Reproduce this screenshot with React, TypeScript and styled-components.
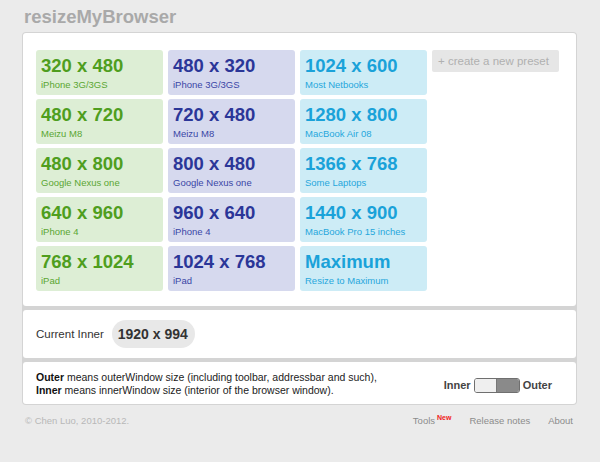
import React from 'react';
import styled, { createGlobalStyle } from 'styled-components';

const GlobalStyle = createGlobalStyle`
  html, body {
    margin: 0;
    padding: 0;
    background: #ebebeb;
    font-family: Arial, "Liberation Sans", sans-serif;
  }
`;

const Page = styled.div`
  width: 600px;
  height: 462px;
  background: #ebebeb;
`;

const Title = styled.h1`
  margin: 0;
  padding: 6px 0 4px 24px;
  font-size: 18.5px;
  line-height: 22px;
  font-weight: bold;
  color: #a9a9a9;
`;

const Panels = styled.div`
  margin-left: 22px;
  width: 553px;
  padding: 1px;
  background: #d4d4d4;
  border-radius: 4px;
  display: flex;
  flex-direction: column;
  gap: 4px;
`;

const Panel = styled.div`
  background: #fff;
  border-radius: 3px;
`;

const PresetPanel = styled(Panel)`
  padding: 17px 17px 15px 13px;
`;

const Grid = styled.div`
  display: grid;
  grid-template-columns: repeat(4, 127px);
  grid-auto-rows: 45px;
  column-gap: 5px;
  row-gap: 4px;
`;

type Tone = 'green' | 'blue' | 'cyan';

const tones: Record<Tone, { bg: string; fg: string; sub: string }> = {
  green: { bg: '#ddeed5', fg: '#4f9e1e', sub: '#5aa632' },
  blue: { bg: '#d6d9ee', fg: '#2b3698', sub: '#3a46a6' },
  cyan: { bg: '#cdecf6', fg: '#1aa2d9', sub: '#27a7dc' },
};

const Tile = styled.div<{ $tone: Tone }>`
  background: ${p => tones[p.$tone].bg};
  border-radius: 3px;
  padding: 6px 5px 0;
  box-sizing: border-box;
  cursor: pointer;
  & .size {
    font-size: 18.5px;
    line-height: 20px;
    font-weight: bold;
    color: ${p => tones[p.$tone].fg};
    white-space: nowrap;
  }
  & .name {
    margin-top: 3px;
    font-size: 9.5px;
    line-height: 11px;
    color: ${p => tones[p.$tone].sub};
    white-space: nowrap;
  }
`;

const NewPreset = styled.div`
  align-self: start;
  height: 22px;
  background: #e6e6e6;
  border-radius: 2px;
  color: #b0b0b0;
  font-size: 11.5px;
  line-height: 22px;
  padding-left: 6px;
`;

const CurrentPanel = styled(Panel)`
  display: flex;
  align-items: center;
  gap: 8px;
  padding: 10px 13px;
  font-size: 11.5px;
  color: #333;
`;

const Pill = styled.span`
  display: inline-block;
  height: 28px;
  line-height: 28px;
  padding: 0 7px 0 6px;
  border-radius: 14px;
  background: #e8e8e8;
  font-size: 14px;
  font-weight: bold;
  color: #333;
`;

const InfoPanel = styled(Panel)`
  display: flex;
  align-items: center;
  justify-content: space-between;
  padding: 9px 24px 8px 13px;
  font-size: 10.5px;
  line-height: 12.5px;
  color: #222;
  & b {
    color: #111;
  }
`;

const ToggleRow = styled.div`
  display: flex;
  align-items: center;
  gap: 3px;
  font-size: 11px;
  font-weight: bold;
  color: #444;
  margin-top: 4px;
`;

const Toggle = styled.div`
  display: flex;
  width: 46px;
  height: 15px;
  box-sizing: border-box;
  border: 1px solid #6f6f6f;
  border-radius: 3px;
  overflow: hidden;
  & span:first-child {
    flex: 1;
    background: #efefef;
  }
  & span:last-child {
    flex: 1;
    background: #8a8a8a;
    border-left: 1px solid #777;
  }
`;

const Footer = styled.div`
  display: flex;
  justify-content: space-between;
  padding: 10px 27px 0 25px;
  font-size: 9.5px;
  line-height: 12px;
`;

const Copy = styled.span`
  color: #b8b8b8;
`;

const Links = styled.div`
  display: flex;
  gap: 18px;
  & a {
    color: #8c8c8c;
    text-decoration: none;
  }
`;

const NewBadge = styled.sup`
  font-size: 7px;
  font-weight: bold;
  color: #f02020;
  margin-left: 2px;
  vertical-align: 4px;
  line-height: 0;
`;

const presets: { size: string; name: string; tone: Tone }[][] = [
  [
    { size: '320 x 480', name: 'iPhone 3G/3GS', tone: 'green' },
    { size: '480 x 320', name: 'iPhone 3G/3GS', tone: 'blue' },
    { size: '1024 x 600', name: 'Most Netbooks', tone: 'cyan' },
  ],
  [
    { size: '480 x 720', name: 'Meizu M8', tone: 'green' },
    { size: '720 x 480', name: 'Meizu M8', tone: 'blue' },
    { size: '1280 x 800', name: 'MacBook Air 08', tone: 'cyan' },
  ],
  [
    { size: '480 x 800', name: 'Google Nexus one', tone: 'green' },
    { size: '800 x 480', name: 'Google Nexus one', tone: 'blue' },
    { size: '1366 x 768', name: 'Some Laptops', tone: 'cyan' },
  ],
  [
    { size: '640 x 960', name: 'iPhone 4', tone: 'green' },
    { size: '960 x 640', name: 'iPhone 4', tone: 'blue' },
    { size: '1440 x 900', name: 'MacBook Pro 15 inches', tone: 'cyan' },
  ],
  [
    { size: '768 x 1024', name: 'iPad', tone: 'green' },
    { size: '1024 x 768', name: 'iPad', tone: 'blue' },
    { size: 'Maximum', name: 'Resize to Maximum', tone: 'cyan' },
  ],
];

export default function App() {
  return (
    <Page>
      <GlobalStyle />
      <Title>resizeMyBrowser</Title>
      <Panels>
        <PresetPanel>
          <Grid>
            {presets.map((row, r) => (
              <React.Fragment key={r}>
                {row.map((p, i) => (
                  <Tile $tone={p.tone} key={i}>
                    <div className="size">{p.size}</div>
                    <div className="name">{p.name}</div>
                  </Tile>
                ))}
                {r === 0 ? <NewPreset>+ create a new preset</NewPreset> : <div />}
              </React.Fragment>
            ))}
          </Grid>
        </PresetPanel>
        <CurrentPanel>
          <span>Current Inner</span>
          <Pill>1920 x 994</Pill>
        </CurrentPanel>
        <InfoPanel>
          <div>
            <b>Outer</b> means outerWindow size (including toolbar, addressbar and such),
            <br />
            <b>Inner</b> means innerWindow size (interior of the browser window).
          </div>
          <ToggleRow>
            <span>Inner</span>
            <Toggle>
              <span />
              <span />
            </Toggle>
            <span>Outer</span>
          </ToggleRow>
        </InfoPanel>
      </Panels>
      <Footer>
        <Copy>© Chen Luo, 2010-2012.</Copy>
        <Links>
          <a href="#">
            Tools<NewBadge>New</NewBadge>
          </a>
          <a href="#">Release notes</a>
          <a href="#">About</a>
        </Links>
      </Footer>
    </Page>
  );
}
